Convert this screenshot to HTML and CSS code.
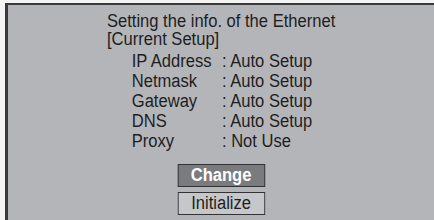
FILE: index.html
```html
<!DOCTYPE html>
<html lang="en">
<head>
    <meta charset="UTF-8">
    <title>Ethernet Setup</title>
    <link rel="stylesheet" href="styles.css">
</head>
<body>
    <div class="screen">
        <div class="content">
            <div class="title">Setting the info. of the Ethernet</div>
            <div class="title">[Current Setup]</div>
            <div class="settings">
                <div class="row"><span class="label">IP Address</span><span class="value">: Auto Setup</span></div>
                <div class="row"><span class="label">Netmask</span><span class="value">: Auto Setup</span></div>
                <div class="row"><span class="label">Gateway</span><span class="value">: Auto Setup</span></div>
                <div class="row"><span class="label">DNS</span><span class="value">: Auto Setup</span></div>
                <div class="row"><span class="label">Proxy</span><span class="value">: Not Use</span></div>
            </div>
            <div class="buttons">
                <button class="btn selected">Change</button>
                <button class="btn">Initialize</button>
            </div>
        </div>
    </div>
</body>
</html>
```

FILE: styles.css
```css
* {
    margin: 0;
    padding: 0;
    box-sizing: border-box;
}

body {
    background-color: #f4f4f4;
    font-family: 'Liberation Sans', Arial, sans-serif;
    color: #1e1e1e;
    overflow: hidden;
    height: 220px;
}

.screen {
    margin: 3px 0 0 5px;
    height: 217px;
    background-color: #b4b5b9;
    border-top: 2px solid #3a3a3a;
    border-left: 3px solid #3a3a3a;
    display: flex;
    justify-content: center;
}

/* the TV font is condensed, squeeze Liberation Sans to match */
.content {
    padding-top: 7px;
    font-size: 18px;
    transform: scaleX(0.92);
}

.title {
    line-height: 18px;
}

.settings {
    margin-top: 3px;
    padding-left: 27px;
}

.row {
    display: flex;
    line-height: 20px;
}

.label {
    width: 98px;
}

.buttons {
    margin-top: 13px;
    display: flex;
    flex-direction: column;
    align-items: center;
    gap: 5px;
}

.btn {
    width: 95px;
    height: 23px;
    border: 1px solid #333;
    background-color: #c6c7ca;
    color: #1e1e1e;
    font-family: inherit;
    font-size: 18px;
    line-height: 21px;
}

.btn.selected {
    background-color: #7a7b7f;
    color: #fff;
    font-weight: bold;
}
```
